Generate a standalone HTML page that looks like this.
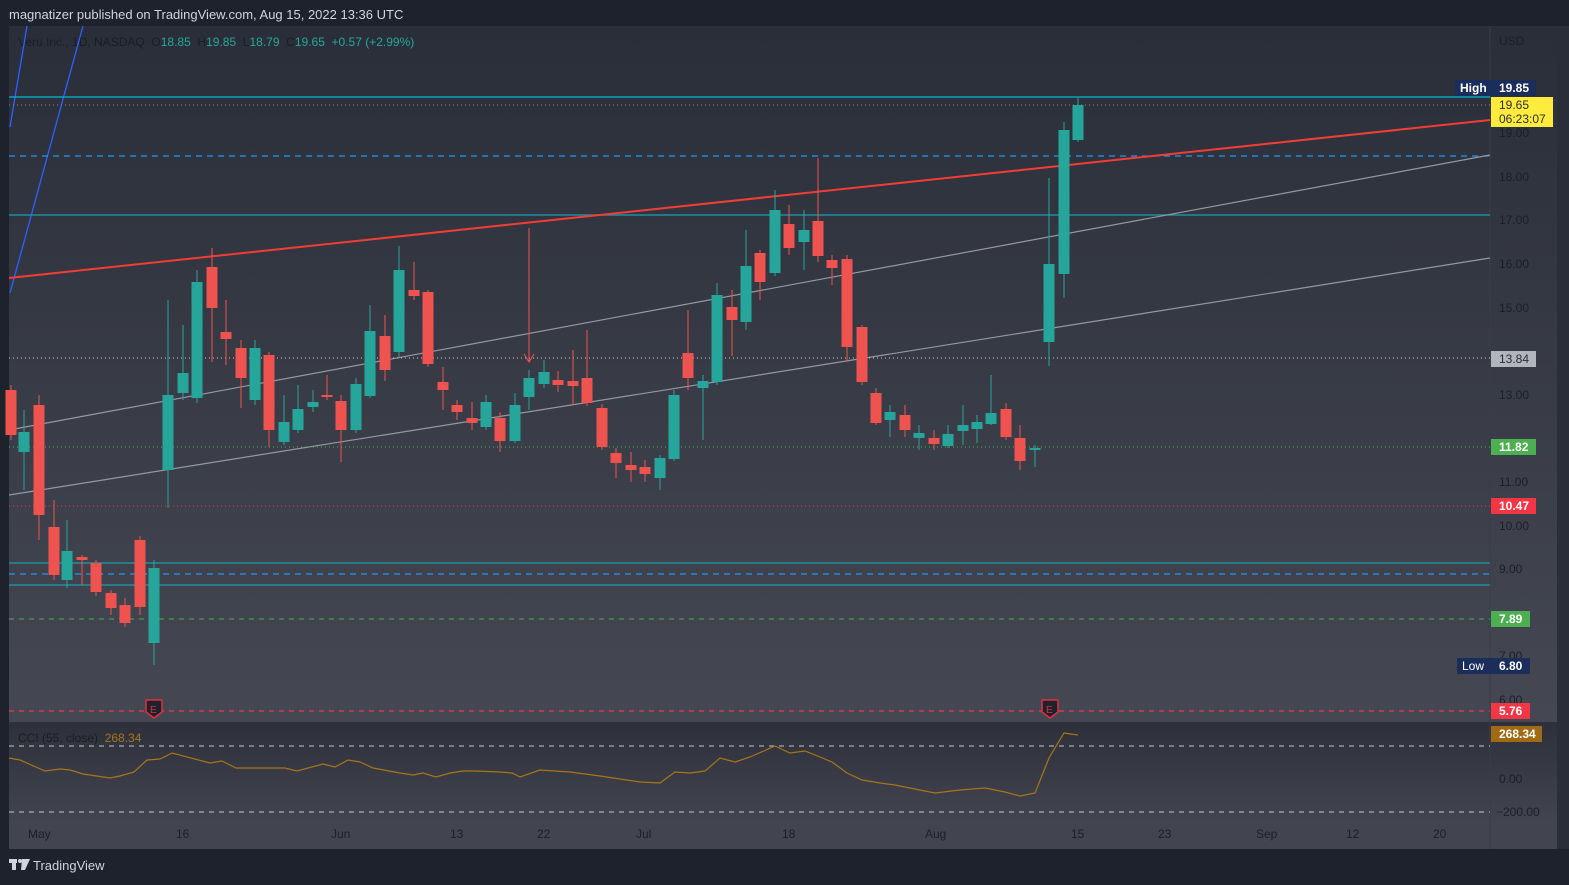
<!DOCTYPE html>
<html><head><meta charset="utf-8"><style>
html,body{margin:0;padding:0;background:#1e222d;width:1569px;height:885px;overflow:hidden;font-family:"Liberation Sans",sans-serif}
svg text{font-family:"Liberation Sans",sans-serif;white-space:pre}
</style></head><body>
<svg id="s" width="1569" height="885" xmlns="http://www.w3.org/2000/svg">
<defs>
<linearGradient id="g1" x1="0" y1="0" x2="0" y2="1"><stop offset="0" stop-color="#2a2e39"/><stop offset="1" stop-color="#454852"/></linearGradient>
<linearGradient id="g2" x1="0" y1="0" x2="0" y2="1"><stop offset="0" stop-color="#2d303a"/><stop offset="1" stop-color="#42454f"/></linearGradient>
</defs>
<rect x="0" y="0" width="1569" height="885" fill="#1e222d"/>
<rect x="1557" y="26" width="12" height="823" fill="#2a2e39"/>
<rect x="9" y="26" width="1548" height="696" fill="url(#g1)"/>
<rect x="9" y="722" width="1548" height="101" fill="url(#g2)"/>
<rect x="9" y="823" width="1548" height="26" fill="#42454f"/>
<line x1="1490" y1="26" x2="1490" y2="849" stroke="#3a3d47" stroke-width="1"/>
<text x="9" y="19" fill="#d1d4dc" font-size="13">magnatizer published on TradingView.com, Aug 15, 2022 13:36 UTC</text>
<text x="18" y="46" font-size="12"><tspan fill="#1a1d25">Veru Inc., 1D, NASDAQ  O</tspan><tspan fill="#26a69a">18.85</tspan><tspan fill="#1a1d25">  H</tspan><tspan fill="#26a69a">19.85</tspan><tspan fill="#1a1d25">  L</tspan><tspan fill="#26a69a">18.79</tspan><tspan fill="#1a1d25">  C</tspan><tspan fill="#26a69a">19.65  +0.57 (+2.99%)</tspan></text>
<g id="lines">
<line x1="27" y1="26" x2="10" y2="127" stroke="#2962ff" stroke-width="1.3"/>
<line x1="83" y1="26" x2="10" y2="293" stroke="#2962ff" stroke-width="1.3"/>
<line x1="9" y1="97" x2="1490" y2="97" stroke="#00bcd4" stroke-width="1.2"/>
<line x1="9" y1="105" x2="1490" y2="105" stroke="#8a8a80" stroke-dasharray="1,3"/>
<line x1="9" y1="156" x2="1490" y2="156" stroke="#2196f3" stroke-width="1.3" stroke-dasharray="6,5"/>
<line x1="9" y1="215" x2="1490" y2="215" stroke="#1e8fa0" stroke-width="1.5"/>
<line x1="9" y1="278" x2="1490" y2="120" stroke="#f23d35" stroke-width="2"/>
<line x1="9" y1="430" x2="1490" y2="155" stroke="#9598a1" stroke-width="1.2"/>
<line x1="9" y1="495" x2="1490" y2="258" stroke="#9598a1" stroke-width="1.2"/>
<line x1="9" y1="358" x2="1490" y2="358" stroke="#c8c8c8" stroke-dasharray="1,3"/>
<line x1="9" y1="447" x2="1490" y2="447" stroke="#4caf50" stroke-dasharray="1,3"/>
<line x1="9" y1="506" x2="1490" y2="506" stroke="#f23645" stroke-dasharray="1,3"/>
<line x1="9" y1="563" x2="1490" y2="563" stroke="#1e8fa0" stroke-width="1.5"/>
<line x1="9" y1="574" x2="1490" y2="574" stroke="#2196f3" stroke-width="1.3" stroke-dasharray="6,5"/>
<line x1="9" y1="585" x2="1490" y2="585" stroke="#1e8fa0" stroke-width="1.5"/>
<line x1="9" y1="619" x2="1490" y2="619" stroke="#4caf50" stroke-dasharray="5,5"/>
<line x1="9" y1="711" x2="1490" y2="711" stroke="#f23645" stroke-width="1.2" stroke-dasharray="5,5"/>
<line x1="529" y1="228" x2="529" y2="362" stroke="#ef5350"/>
<path d="M524 354 L529 362 L534 354" fill="none" stroke="#ef5350"/>
</g>
<g id="candles"></g>
<g font-size="12" fill="#1c1f28">
<text x="1499" y="45">USD</text>
<text x="1499" y="137">19.00</text><text x="1499" y="181">18.00</text><text x="1499" y="224">17.00</text>
<text x="1499" y="268">16.00</text><text x="1499" y="312">15.00</text><text x="1499" y="399">13.00</text>
<text x="1499" y="486">11.00</text><text x="1499" y="530">10.00</text><text x="1499" y="573">9.00</text>
<text x="1499" y="660">7.00</text><text x="1499" y="704">6.00</text>
<text x="1499" y="783">0.00</text><text x="1496" y="816">−200.00</text>
</g>
<g font-size="12" fill="#1c1f28">
<text x="28" y="838">May</text><text x="176" y="838">16</text><text x="331" y="838">Jun</text><text x="450" y="838">13</text>
<text x="537" y="838">22</text><text x="636" y="838">Jul</text><text x="782" y="838">18</text><text x="925" y="838">Aug</text>
<text x="1071" y="838">15</text><text x="1158" y="838">23</text><text x="1256" y="838">Sep</text><text x="1346" y="838">12</text><text x="1433" y="838">20</text>
</g>
<line x1="9" y1="746" x2="1490" y2="746" stroke="#c8c8c8" stroke-dasharray="5,5"/>
<line x1="9" y1="812" x2="1490" y2="812" stroke="#c8c8c8" stroke-dasharray="5,5"/>
<text x="18" y="742" font-size="12"><tspan fill="#1a1d25">CCI (55, close)  </tspan><tspan fill="#a8741a">268.34</tspan></text>
<polyline fill="none" stroke="#a8741a" stroke-width="1.2" points="9,758 20,760 45,771 60,769 70,770 83,774 110,778 120,776 134,772 147,760 160,759 172,753 210,763 222,761 236,768 270,768 285,768 297,771 323,764 335,767 348,760 360,762 373,768 400,773 413,775 423,773 436,777 450,773 463,771 475,771 500,772 512,773 520,777 540,770 570,772 600,776 640,782 660,783 675,772 690,773 705,771 720,758 735,762 750,757 775,746 790,753 805,751 820,757 832,762 847,773 862,780 880,783 895,785 915,789 935,793 960,790 985,788 1005,792 1020,796 1035,793 1049,758 1064,733 1078,735"/>
<g>
<path d="M146 700 h16 v12 l-8 6 l-8 -6z" fill="#1e222d" stroke="#e0303c" stroke-width="1.5"/><text x="150" y="713" font-size="10" fill="#e0303c">E</text>
<path d="M1042 700 h16 v12 l-8 6 l-8 -6z" fill="#1e222d" stroke="#e0303c" stroke-width="1.5"/><text x="1046" y="713" font-size="10" fill="#e0303c">E</text>
</g>
<g font-size="12" font-weight="bold" fill="#fff">
<rect x="1455" y="80" width="36" height="16" fill="#1b2d5b"/><text x="1460" y="92">High</text>
<rect x="1491" y="80" width="45" height="16" fill="#1b2d5b"/><text x="1499" y="92">19.85</text>
<rect x="1491" y="97" width="62" height="30" fill="#ffeb3b"/>
<text x="1499" y="109" fill="#2a2e39" font-weight="normal">19.65</text><text x="1499" y="123" fill="#2a2e39" font-weight="normal">06:23:07</text>
<rect x="1491" y="351" width="45" height="16" fill="#b2b5be"/><text x="1499" y="363" fill="#2a2e39" font-weight="normal">13.84</text>
<rect x="1491" y="439" width="45" height="16" fill="#4caf50"/><text x="1499" y="451">11.82</text>
<rect x="1491" y="498" width="45" height="16" fill="#f23645"/><text x="1499" y="510">10.47</text>
<rect x="1491" y="611" width="39" height="16" fill="#4caf50"/><text x="1499" y="623">7.89</text>
<rect x="1457" y="658" width="34" height="16" fill="#1b2d5b"/><text x="1462" y="670" font-weight="normal">Low</text>
<rect x="1491" y="658" width="39" height="16" fill="#1b2d5b"/><text x="1499" y="670">6.80</text>
<rect x="1491" y="703" width="39" height="16" fill="#f23645"/><text x="1499" y="715">5.76</text>
<rect x="1491" y="726" width="51" height="16" fill="#a06a14"/><text x="1499" y="738">268.34</text>
</g>
<g fill="#d1d4dc"><rect x="9" y="859" width="8" height="4"/><rect x="12" y="859" width="4" height="11"/><circle cx="20" cy="861" r="2"/><path d="M22 859 h8 l-5 11 h-4z"/></g>
<text x="33" y="870" font-size="13" fill="#d1d4dc">TradingView</text>
</svg>
<script>
var d=[[11,385,440,390,435,0],[24,410,490,432,452,1],[39,395,540,405,515,0],[54,500,580,527,575,0],[67,520,588,580,551,1],[82,555,585,557,560,0],[96,560,596,563,592,0],[111,590,615,593,608,0],[125,598,627,605,623,0],[140,536,615,540,607,0],[154,560,665,643,568,1],[168,300,508,470,395,1],[183,325,400,393,373,1],[197,270,403,398,282,1],[212,248,362,267,308,0],[226,300,365,332,339,0],[241,340,408,348,378,0],[255,340,405,400,348,1],[269,352,447,355,430,0],[284,395,445,442,422,1],[298,385,433,430,409,1],[313,390,412,407,402,1],[327,375,400,395,397,0],[341,395,462,401,430,0],[356,378,433,430,384,1],[370,305,398,396,331,1],[385,315,381,336,370,0],[399,246,357,352,270,1],[414,262,300,290,296,0],[428,290,367,292,364,0],[443,367,410,382,390,0],[457,400,420,405,412,0],[472,402,430,418,423,0],[486,395,430,427,402,1],[500,412,452,418,441,0],[515,393,443,441,405,1],[529,370,410,397,378,1],[544,360,388,384,372,1],[558,371,392,380,385,0],[573,350,405,381,386,0],[587,330,406,378,403,0],[602,404,450,408,447,0],[616,448,478,453,463,0],[631,452,482,465,470,0],[645,460,482,467,474,0],[660,455,490,478,458,1],[674,390,461,459,395,1],[688,310,390,353,378,0],[703,375,440,388,381,1],[717,283,385,382,295,1],[732,290,356,307,320,0],[746,230,330,322,266,1],[760,250,300,253,282,0],[775,190,276,273,210,1],[789,205,255,224,248,0],[804,210,270,242,230,1],[818,158,262,221,256,0],[832,255,285,260,268,0],[847,255,362,259,347,0],[862,325,385,327,382,0],[876,388,425,393,423,0],[890,405,437,420,412,1],[905,405,437,415,430,0],[919,425,450,438,433,1],[934,430,450,438,444,0],[948,425,448,446,434,1],[963,405,445,431,425,1],[977,415,443,429,422,1],[991,375,425,424,413,1],[1006,403,440,409,437,0],[1020,425,470,438,461,0],[1035,445,467,450,448,1],[1049,178,366,342,264,1],[1064,122,298,274,130,1],[1078,98,142,140,105,1]];
var g=document.getElementById('candles'),h='';
d.forEach(function(c){var col=c[5]?'#26a69a':'#ef5350';var t=Math.min(c[3],c[4]),b=Math.max(c[3],c[4]);if(b-t<2)b=t+2;
h+='<line x1="'+c[0]+'" y1="'+c[1]+'" x2="'+c[0]+'" y2="'+c[2]+'" stroke="'+col+'" stroke-width="1"/>';
h+='<rect x="'+(c[0]-5.5)+'" y="'+t+'" width="11" height="'+(b-t)+'" fill="'+col+'"/>';});
g.innerHTML=h;
</script>
</body></html>
